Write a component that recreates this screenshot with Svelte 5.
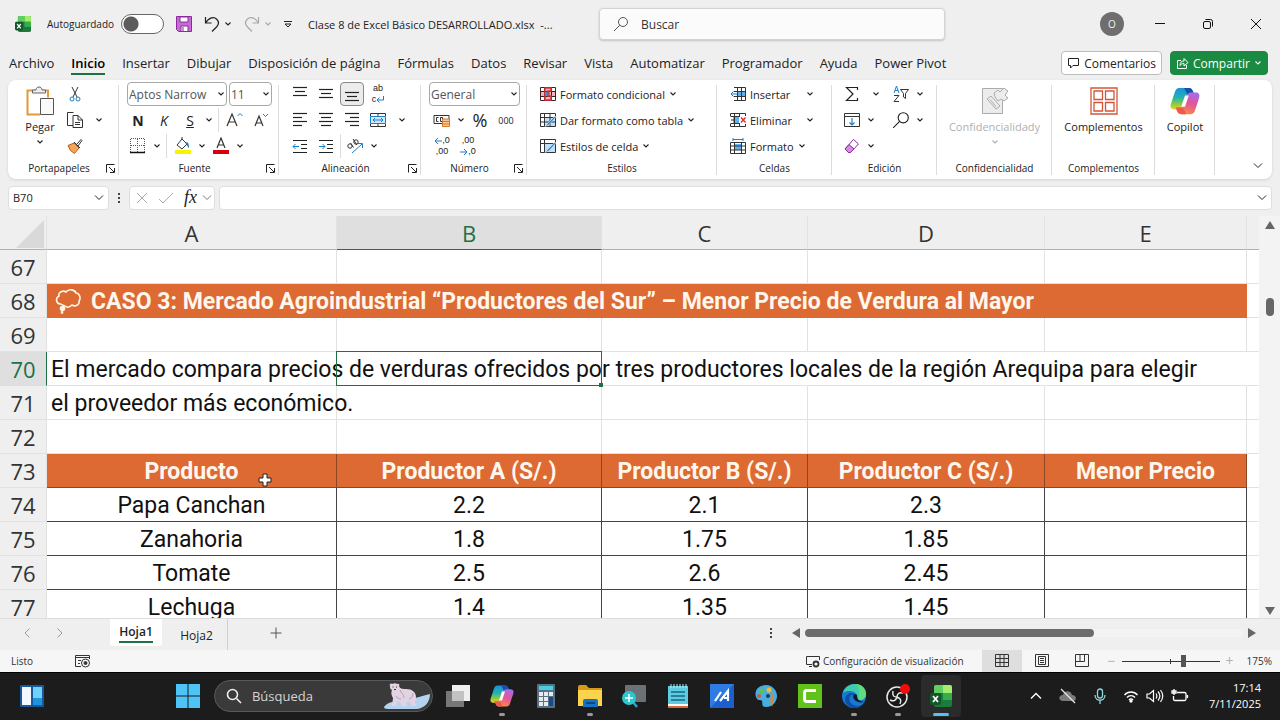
<script lang="ts">
  interface Row {
    n: number;
    kind: 'empty' | 'banner' | 'text' | 'head' | 'data';
    cells: string[];
  }

  const menu = [
    'Archivo', 'Inicio', 'Insertar', 'Dibujar', 'Disposición de página', 'Fórmulas', 'Datos',
    'Revisar', 'Vista', 'Automatizar', 'Programador', 'Ayuda', 'Power Pivot'
  ];

  const columns = ['A', 'B', 'C', 'D', 'E'];

  const rows: Row[] = [
    { n: 67, kind: 'empty', cells: [] },
    { n: 68, kind: 'banner', cells: ['CASO 3: Mercado Agroindustrial “Productores del Sur” – Menor Precio de Verdura al Mayor'] },
    { n: 69, kind: 'empty', cells: [] },
    { n: 70, kind: 'text', cells: ['El mercado compara precios de verduras ofrecidos por tres productores locales de la región Arequipa para elegir'] },
    { n: 71, kind: 'empty', cells: ['el proveedor más económico.'] },
    { n: 72, kind: 'empty', cells: [] },
    { n: 73, kind: 'head', cells: ['Producto', 'Productor A (S/.)', 'Productor B (S/.)', 'Productor C (S/.)', 'Menor Precio'] },
    { n: 74, kind: 'data', cells: ['Papa Canchan', '2.2', '2.1', '2.3'] },
    { n: 75, kind: 'data', cells: ['Zanahoria', '1.8', '1.75', '1.85'] },
    { n: 76, kind: 'data', cells: ['Tomate', '2.5', '2.6', '2.45'] },
    { n: 77, kind: 'data', cells: ['Lechuga', '1.4', '1.35', '1.45'] }
  ];

  const apps = [
    { id: 'taskview', label: 'Vista de tareas' },
    { id: 'copilot', label: 'Copilot', open: true },
    { id: 'calc', label: 'Calculadora' },
    { id: 'folder', label: 'Explorador de archivos', open: true },
    { id: 'magnifier', label: 'Lupa' },
    { id: 'notepad', label: 'Bloc de notas' },
    { id: 'myasus', label: 'MyASUS' },
    { id: 'paint', label: 'Paint' },
    { id: 'camtasia', label: 'Camtasia' },
    { id: 'edge', label: 'Edge', open: true },
    { id: 'obs', label: 'OBS', open: true },
    { id: 'excel', label: 'Excel', open: true, active: true }
  ];

  let activeMenu = $state('Inicio');
  let activeCell = $state('B70');
  let autosave = $state(false);
  let zoom = $state(175);
</script>

{#snippet chevron()}
  <svg class="chev" width="8" height="8" viewBox="0 0 8 8"><path d="M1.5 2.5 4 5l2.5-2.5" fill="none" stroke="currentColor" stroke-width="1.1" /></svg>
{/snippet}

{#snippet lines(list: number[][])}
  <svg width="16" height="16" viewBox="0 0 16 16" stroke="#222" stroke-width="1.2">
    {#each list as [x1, x2, y]}<line {x1} {x2} y1={y} y2={y} />{/each}
  </svg>
{/snippet}

{#snippet copilotIcon(size: number)}
  <svg width={size} height={size} viewBox="0 0 32 32">
    <defs>
      <linearGradient id="cpA" x1="0" y1="0" x2="0" y2="1"><stop offset="0" stop-color="#1d8fe0" /><stop offset=".45" stop-color="#22b3b0" /><stop offset=".75" stop-color="#8ecb3f" /><stop offset="1" stop-color="#f4cf22" /></linearGradient>
      <linearGradient id="cpB" x1=".7" y1="0" x2=".3" y2="1"><stop offset="0" stop-color="#a66ce8" /><stop offset=".45" stop-color="#e2559c" /><stop offset="1" stop-color="#fa8f3c" /></linearGradient>
    </defs>
    <path d="M10 2h10c3 0 4 2 5 5l1 3h-4c-3 0-4 1-5 4l-3 9c-1 2-2 2-4 2H5c-4 0-5-2-4-6l4-12c1-3 2-5 5-5z" fill="url(#cpA)" />
    <path d="M15 2h5c3 0 4 2 5 5l1 3h-4c-2 0-4-1-5-4z" fill="#184fae" />
    <path d="M22 30H12c-3 0-4-2-5-5l-1-2h4c3 0 4-1 5-4l3-9c1-2 2-3 4-3h5c4 0 5 2 4 6l-4 12c-1 3-2 5-5 5z" fill="url(#cpB)" />
    <path d="M17 30h-5c-3 0-4-2-5-5l-1-2h4c3 0 5 1 6 4z" fill="#ee5a4e" />
    <path d="M16 10h4l-4 12h-4z" fill="#fff" />
  </svg>
{/snippet}

{#snippet excelIcon(size: number)}
  <svg width={size} height={size} viewBox="0 0 22 22">
    <rect x="4" y="0" width="18" height="22" rx="2" fill="#1c7a3c" />
    <path d="M6 0h7v8H4V2q0-2 2-2z" fill="#5fd060" /><path d="M13 0h7q2 0 2 2v6h-9z" fill="#a2ee6c" />
    <rect x="13" y="8" width="9" height="7" fill="#37ae4c" />
    <rect x="0" y="8" width="11" height="12" rx="2" fill="#12572b" />
    <path d="M3 11l5 6M8 11l-5 6" stroke="#fff" stroke-width="1.8" />
  </svg>
{/snippet}

{#snippet magnifier(size: number)}
  <svg width={size} height={size} viewBox="0 0 16 16" fill="none" stroke="currentColor"><circle cx="10" cy="6" r="4.5" /><path d="M6.8 9.2 1 15" /></svg>
{/snippet}

{#snippet gridIcon(kind: string)}
  <svg width="16" height="16" viewBox="0 0 16 16" fill="none">
    {#if kind === 'cond'}
      <path d="M4 1h8v14H4zM1 5h14v6H1z" fill="#f7b3b3" /><path d="M6 6h4v5H6z" fill="#4a9be0" />
      <path d="M.5 1.5h15v13H.5zM.5 5.5h15M.5 10.5h15M4.5 1v14M11.5 1v14" stroke="#3a2226" />
      <path d="M5 2h6v3H8v5h3v4H5z" fill="none" stroke="#e0303a" stroke-width="1.5" />
    {:else if kind === 'table' || kind === 'cell'}
      <path d="M5 5h10v9H5z" fill="#bfe0f7" />
      <path d="M.5 1.5h15v13H.5zM.5 5.5h15M4.5 1v14" stroke="#333" />
      {#if kind === 'table'}<path d="M10 1.5v13M1 10h14" stroke="#333" />{/if}
      <path d="M15 4 8 11l-3 3.5 4-1.5 7-8z" fill="#2e86d0" stroke="#fff" stroke-width=".5" />
    {:else if kind === 'insert'}
      <path d="M8 5h8v6H8z" fill="#5fb2ec" />
      <path d="M4 1.5h11.5v13H4M4 5.5h11.5M4 10.5h11.5M7.5 1v14M11.5 1v14" stroke="#333" />
      <path d="M7 8H1M3.5 5.5 1 8l2.5 2.5" stroke="#1a7fcb" />
    {:else if kind === 'delete'}
      <path d="M3 5h6v6H3z" fill="#5fb2ec" />
      <path d="M.5 4V1.5h15V4M.5 4.5H10M.5 11.5H10M.5 12v2.5h15V12M4.5 1v14M9.5 1v4M9.5 11v4M1 8h3" stroke="#333" />
      <path d="m11 5.5 4.5 5M15.5 5.5l-4.5 5" stroke="#d92b2b" stroke-width="1.3" />
    {:else}
      <path d="M4 6h8v6H4z" fill="#5fb2ec" />
      <path d="M.5 4.5h15v11H.5zM.5 8h15M.5 12h15M4.500 4v11M11.5 4v11" stroke="#333" />
      <path d="M3 1.5h10M3 0v3M13 0v3" stroke="#1a7fcb" />
    {/if}
  </svg>
{/snippet}

{#snippet launcher()}
  <button class="launch" aria-label="Más opciones">
    <svg width="9" height="9" viewBox="0 0 9 9" fill="none" stroke="#222"><path d="M.5 8.5V.5h8M3 3l5 5M8.5 4v4.5H4" /></svg>
  </button>
{/snippet}

<div class="window">
  <header class="titlebar">
    <div class="quick">
      {@render excelIcon(16)}
      <label class="autosave">Autoguardado <input type="checkbox" bind:checked={autosave} /></label>
      <button aria-label="Guardar">
        <svg width="16" height="16" viewBox="0 0 16 16"><path d="M.5.5h15v15H2.5l-2-2z" fill="#c86ad6" stroke="#8a2a9c" /><path d="M4 1h8v5H4zM5 10h7v5.500H5z" fill="#fff" stroke="#8a2a9c" /><path d="M7 11v4" stroke="#8a2a9c" /></svg>
      </button>
      <button class="arrow" aria-label="Deshacer">
        <svg width="16" height="16" viewBox="0 0 16 16" fill="none" stroke="#222" stroke-width="1.2"><path d="M1.5 1v6h6M1.5 7C5 1 10 .5 12.5 3s2.5 5.500 0 8L8 15.5" /></svg>{@render chevron()}
      </button>
      <button class="arrow off" aria-label="Rehacer">
        <svg width="16" height="16" viewBox="0 0 16 16" fill="none" stroke="#a8a8a8" stroke-width="1.2"><path d="M14.5 1v6h-6M14.5 7C11 1 6 .5 3.5 3S1 8.5 3.5 11L8 15.5" /></svg>{@render chevron()}
      </button>
      <button class="customize" aria-label="Personalizar barra">
        <svg width="8" height="8" viewBox="0 0 8 8" fill="none" stroke="#222"><path d="M0 1.5h8M1 4h6L4 7z" /></svg>
      </button>
      <span class="filename">Clase 8 de Excel Básico DESARROLLADO.xlsx&nbsp; -...</span>
    </div>
    <label class="search">{@render magnifier(16)}<input type="search" placeholder="Buscar" aria-label="Buscar" /></label>
    <div class="controls">
      <button aria-label="Cuenta"><span class="avatar">O</span></button>
      <button aria-label="Minimizar"><svg width="12" height="12" stroke="#111"><path d="M1 5.5h10" /></svg></button>
      <button aria-label="Restaurar"><svg width="12" height="12" viewBox="0 0 12 12" fill="none" stroke="#111"><rect x="1.5" y="3.5" width="7" height="7" rx="1.5" /><path d="M3.5 1.5h5q2 0 2 2v5" /></svg></button>
      <button aria-label="Cerrar"><svg width="12" height="12" stroke="#111"><path d="m1 1 10 10M11 1 1 11" /></svg></button>
    </div>
  </header>

  <nav class="menu">
    {#each menu as item}
      <button class="menu-item" class:active={activeMenu === item} onclick={() => (activeMenu = item)}>{item}</button>
    {/each}
    <div class="menu-actions">
      <button class="comments">
        <svg width="13" height="13" viewBox="0 0 13 13" fill="none" stroke="#222"><path d="M1.5 1.5h10v7H6L3.5 11V8.500h-2z" /></svg>Comentarios
      </button>
      <button class="share">
        <svg width="13" height="13" viewBox="0 0 13 13" fill="none" stroke="#fff"><path d="M5 3.5H1.5v8h9V8M4 8.5c0-3 1.5-4.500 4-4.500V1.5l4 4-4 3.500V6.500C6 6.5 5 7 4 8.5z" /></svg>Compartir {@render chevron()}
      </button>
    </div>
  </nav>

  <section class="ribbon">
    <div class="group">
      <div class="body clipboard">
        <button class="big">
          <svg width="28" height="30" viewBox="0 0 28 30" fill="none"><path d="M9 4.5H1.5v24H14M17 4.5h5v7" stroke="#e39a38" stroke-width="2" /><path d="M6.5 7V4H10c0-4 6-4 6 0h3.5v3z" fill="#eee" stroke="#666" /><path d="M14.5 12.5h13v16h-13z" fill="#fafafa" stroke="#555" /></svg>
          <span>Pegar</span>{@render chevron()}
        </button>
        <div class="stack">
          <button class="tool" aria-label="Cortar"><svg width="12" height="16" viewBox="0 0 12 16" fill="none"><path d="m3 1 5 10M9 1 4 11" stroke="#333" /><circle cx="3" cy="13" r="2" stroke="#1a7fcb" /><circle cx="9" cy="13" r="2" stroke="#1a7fcb" /></svg></button>
          <div class="line">
            <button class="tool" aria-label="Copiar"><svg width="16" height="16" viewBox="0 0 16 16" fill="none" stroke="#333"><path d="M6 13.5H.5V.5h6M6 3.5h5l4.500 4.500v7.500H6zM11 3.5V8h4.500M8 10.5h5M8 12.5h5" /></svg></button>
            <button class="drop wide" aria-label="Opciones de copiar">{@render chevron()}</button>
          </div>
          <button class="tool" aria-label="Copiar formato"><svg width="16" height="16" viewBox="0 0 16 16"><path d="M1 7.5 7 5l5 5-4.500 5.500-4-3z" fill="#f2a65a" stroke="#c45a12" /><path d="m7 4 6 6M9.5 6.5l4.500-5 1 1L11 8" fill="#fff" stroke="#333" /></svg></button>
        </div>
      </div>
      <footer><span>Portapapeles</span>{@render launcher()}</footer>
    </div>

    <div class="group">
      <div class="body stack fonts">
        <div class="line">
          <span class="picker font"><select aria-label="Fuente"><option>Aptos Narrow</option></select>{@render chevron()}</span>
          <span class="picker size"><select aria-label="Tamaño"><option>11</option></select>{@render chevron()}</span>
        </div>
        <div class="line">
          <button class="tool bold">N</button><button class="tool italic">K</button><button class="tool under">S</button>
          <button class="drop" aria-label="Subrayado">{@render chevron()}</button>
          <i class="rule"></i>
          <button class="tool" aria-label="Aumentar fuente"><svg width="18" height="16" viewBox="0 0 18 16" fill="none"><path d="M1 14 6 2l5 12M3 10h6" stroke="#333" stroke-width="1.2" /><path d="m11.5 4 2.5-2.5L16.5 4" stroke="#1a7fcb" /></svg></button>
          <button class="tool" aria-label="Reducir fuente"><svg width="16" height="16" viewBox="0 0 16 16" fill="none"><path d="M2 14 6 4l4 10M3.5 11h5" stroke="#333" stroke-width="1.2" /><path d="m10 2 2.5 2.500L15 2" stroke="#1a7fcb" /></svg></button>
        </div>
        <div class="line">
          <button class="tool" aria-label="Bordes"><svg width="16" height="16" viewBox="0 0 16 16" fill="none" stroke="#555"><path d="M.5 14V.5h14V14M7.5 1v13M1 7.5h14" stroke-dasharray="1 1" /><path d="M0 14.5h15" stroke="#111" stroke-width="1.5" /></svg></button>
          <button class="drop" aria-label="Tipos de borde">{@render chevron()}</button>
          <i class="rule"></i>
          <button class="tool" aria-label="Color de relleno"><svg width="18" height="18" viewBox="0 0 18 18"><path d="m8 2 5 5-5 5-5-4zM8 2V0" fill="#fff" stroke="#333" /><path d="M11 6c3-2 4 0 4 5-2-1-1-3-4-5z" fill="#1a7fcb" /><path d="M1 13h16v4H1z" fill="#f8f400" /></svg></button>
          <button class="drop" aria-label="Colores de relleno">{@render chevron()}</button>
          <button class="tool" aria-label="Color de fuente"><svg width="18" height="18" viewBox="0 0 18 18"><path d="M5 11 9 1l4 10M6.5 8h5" fill="none" stroke="#333" stroke-width="1.2" /><path d="M1 13h16v4H1z" fill="#d4000f" /></svg></button>
          <button class="drop" aria-label="Colores de fuente">{@render chevron()}</button>
        </div>
      </div>
      <footer><span>Fuente</span>{@render launcher()}</footer>
    </div>

    <div class="group">
      <div class="body stack">
        <div class="line">
          <button class="tool" aria-label="Alinear arriba">{@render lines([[1, 15, 1.5], [3, 13, 5.5], [1, 15, 9.5]])}</button>
          <button class="tool" aria-label="Alinear en medio">{@render lines([[1, 15, 3.5], [3, 13, 7.5], [1, 15, 11.5]])}</button>
          <button class="tool on" aria-label="Alinear abajo">{@render lines([[1, 15, 6.5], [3, 13, 10.5], [1, 15, 14.5]])}</button>
          <button class="tool pair" aria-label="Ajustar texto">
            <span>ab</span>
            <span>c<svg width="8" height="8" viewBox="0 0 8 8" fill="none" stroke="#1a7fcb"><path d="M7.5 0v4H1M3.5 1.5 1 4l2.5 2.5" /></svg></span>
          </button>
        </div>
        <div class="line">
          <button class="tool" aria-label="Alinear a la izquierda">{@render lines([[1, 15, 1.5], [1, 10, 5.5], [1, 15, 9.5], [1, 10, 13.5]])}</button>
          <button class="tool" aria-label="Centrar">{@render lines([[1, 15, 1.5], [3, 13, 5.5], [1, 15, 9.5], [3, 13, 13.5]])}</button>
          <button class="tool" aria-label="Alinear a la derecha">{@render lines([[1, 15, 1.5], [6, 15, 5.5], [1, 15, 9.5], [6, 15, 13.5]])}</button>
          <button class="tool" aria-label="Combinar y centrar"><svg width="16" height="16" viewBox="0 0 16 16" fill="none"><path d="M.5 4.5h15v7H.5z" fill="#cfe9fa" stroke="#1a7fcb" /><path d="M.5 4V1.5h15V4M8 1.5V4M.5 12v2.500h15V12M8 12v2.500" stroke="#333" /><path d="M3 8h10M5 6 3 8l2 2M11 6l2 2-2 2" stroke="#1a7fcb" /></svg></button>
          <button class="drop wide" aria-label="Opciones de combinar">{@render chevron()}</button>
        </div>
        <div class="line">
          <button class="tool" aria-label="Disminuir sangría"><svg width="16" height="16" viewBox="0 0 16 16" fill="none" stroke="#222"><path d="M1 2.5h14M9 6.5h6M9 10.5h6M1 14.5h14" /><path d="M7 8.5H1M3.5 6 1 8.5 3.5 11" stroke="#1a7fcb" /></svg></button>
          <button class="tool" aria-label="Aumentar sangría"><svg width="16" height="16" viewBox="0 0 16 16" fill="none" stroke="#222"><path d="M1 2.5h14M9 6.5h6M9 10.5h6M1 14.5h14" /><path d="M1 8.5h6M4.5 6 7 8.5 4.5 11" stroke="#1a7fcb" /></svg></button>
          <i class="rule tight"></i>
          <button class="tool" aria-label="Orientación"><svg width="18" height="18" viewBox="0 0 18 18" fill="none"><g stroke="#333"><circle cx="4" cy="9" r="2.2" /><path d="m4.500 6 3 4.500M7 2l4 6" /><circle cx="10" cy="5" r="2.2" /></g><path d="M6 16 16 7M12 6.5h4.500V11" stroke="#1a7fcb" /></svg></button>
          <button class="drop" aria-label="Orientaciones">{@render chevron()}</button>
        </div>
      </div>
      <footer><span>Alineación</span>{@render launcher()}</footer>
    </div>

    <div class="group">
      <div class="body stack">
        <div class="line">
          <span class="picker number"><select aria-label="Formato de número"><option>General</option></select>{@render chevron()}</span>
        </div>
        <div class="line">
          <button class="tool" aria-label="Moneda"><svg width="18" height="16" viewBox="0 0 18 16" fill="none"><path d="M1 3.5h15v8H1z" stroke="#333" /><path d="M5.5 5.5H3.5v4h2M9.5 5.5h-2v4h2z" stroke="#333" /><path d="M9.5 7h7v7.500h-7z" fill="#f7c79a" stroke="#d9782a" /><path d="M9.5 9.5h7M9.5 12h7" stroke="#d9782a" /></svg></button>
          <button class="drop" aria-label="Monedas">{@render chevron()}</button>
          <button class="tool percent">%</button><button class="tool thousands">000</button>
        </div>
        <div class="line">
          <button class="tool pair" aria-label="Aumentar decimales">
            <span><svg width="8" height="10" viewBox="0 0 8 10" fill="none" stroke="#1a7fcb"><path d="M8 5H1M4 2 1 5l3 3" /></svg>,0</span>
            <span>,00</span>
          </button>
          <button class="tool pair" aria-label="Disminuir decimales">
            <span>,00</span>
            <span><svg width="8" height="10" viewBox="0 0 8 10" fill="none" stroke="#1a7fcb"><path d="M0 5h7M4 2l3 3-3 3" /></svg>,0</span>
          </button>
        </div>
      </div>
      <footer><span>Número</span>{@render launcher()}</footer>
    </div>

    <div class="group">
      <div class="body stack inset">
        <button class="row-btn">{@render gridIcon('cond')}Formato condicional{@render chevron()}</button>
        <button class="row-btn">{@render gridIcon('table')}Dar formato como tabla{@render chevron()}</button>
        <button class="row-btn">{@render gridIcon('cell')}Estilos de celda{@render chevron()}</button>
      </div>
      <footer><span>Estilos</span></footer>
    </div>

    <div class="group">
      <div class="body stack inset">
        <button class="row-btn spread">{@render gridIcon('insert')}<span>Insertar</span>{@render chevron()}</button>
        <button class="row-btn spread">{@render gridIcon('delete')}<span>Eliminar</span>{@render chevron()}</button>
        <button class="row-btn">{@render gridIcon('format')}Formato{@render chevron()}</button>
      </div>
      <footer><span>Celdas</span></footer>
    </div>

    <div class="group">
      <div class="body edit">
        <div class="line">
          <button class="tool" aria-label="Autosuma"><svg width="14" height="16" viewBox="0 0 14 16" fill="none" stroke="#222" stroke-width="1.2"><path d="M12.5 4V1.5H1.5L8 8l-6.500 6.500h11V12" /></svg></button>
          <button class="drop wide" aria-label="Más funciones">{@render chevron()}</button>
        </div>
        <div class="line">
          <button class="tool" aria-label="Ordenar y filtrar"><svg width="18" height="18" viewBox="0 0 18 18" fill="none"><path d="m2 8 2.5-7L7 8M3 5.5h3" stroke="#1a7fcb" /><path d="M2 10.5h5L2 16.5h5M8.5 4.5h8L13.5 8.5v5l-2-1.500V8.5z" stroke="#333" /></svg></button>
          <button class="drop" aria-label="Opciones de orden">{@render chevron()}</button>
        </div>
        <div class="line">
          <button class="tool" aria-label="Rellenar"><svg width="16" height="16" viewBox="0 0 16 16" fill="none"><path d="M.5 1.5h15v13H.5zM.5 4.5h15" stroke="#333" /><path d="M8 6v7M5.500 10.5 8 13l2.500-2.500" stroke="#1a7fcb" stroke-width="1.2" /></svg></button>
          <button class="drop" aria-label="Opciones de relleno">{@render chevron()}</button>
        </div>
        <div class="line">
          <button class="tool" aria-label="Buscar y seleccionar">{@render magnifier(18)}</button>
          <button class="drop" aria-label="Opciones de búsqueda">{@render chevron()}</button>
        </div>
        <div class="line">
          <button class="tool" aria-label="Borrar"><svg width="16" height="16" viewBox="0 0 16 16"><path d="M9.5 1.5 14.5 6l-8 8.500h-2L1 11z" fill="#fff" stroke="#8a2a9c" /><path d="m1 11 4-4.500 5 4.500-3.500 3.500h-2z" fill="#d58be0" stroke="#8a2a9c" /></svg></button>
          <button class="drop" aria-label="Opciones de borrar">{@render chevron()}</button>
        </div>
      </div>
      <footer><span>Edición</span></footer>
    </div>

    <div class="group">
      <div class="body center">
        <button class="big off">
          <svg width="28" height="30" viewBox="0 0 28 30" fill="#ececec" stroke="#ababab"><path d="M1.5 2.5h20v25h-20z" /><path d="m6 13 4-3 9 10-4 3zM9 13.500l6 7M13 7l4-3 2 2 4-4 4 3-3 4 3 3-4 3-3-2-3 2-3-4z" /></svg>
          <span>Confidencialidady</span>{@render chevron()}
        </button>
      </div>
      <footer><span>Confidencialidad</span></footer>
    </div>

    <div class="group">
      <div class="body center">
        <button class="big">
          <svg width="28" height="30" viewBox="0 0 28 30" fill="none" stroke="#d2553a" stroke-width="1.3"><path d="M1 2h26v26H1zM4 5h8.500v8.500H4zM15.5 5H24v8.500h-8.500zM4 16.500h8.500V25H4zM15.500 16.500H24V25h-8.500z" /></svg>
          <span>Complementos</span>
        </button>
      </div>
      <footer><span>Complementos</span></footer>
    </div>

    <div class="group">
      <div class="body center">
        <button class="big">{@render copilotIcon(30)}<span>Copilot</span></button>
      </div>
    </div>

    <button class="collapse" aria-label="Contraer la cinta"><svg width="10" height="8" viewBox="0 0 10 8" fill="none" stroke="#222"><path d="m1 1.5 4 4 4-4" /></svg></button>
  </section>

  <div class="formula-bar">
    <div class="box name">
      <input aria-label="Cuadro de nombres" bind:value={activeCell} />
      <svg width="10" height="8" viewBox="0 0 10 8" fill="none" stroke="#222"><path d="m1 1.5 4 4 4-4" /></svg>
    </div>
    <span class="dots"></span>
    <div class="box fx">
      <button aria-label="Cancelar"><svg width="12" height="12" stroke="#aaa"><path d="m1 1 10 10M11 1 1 11" /></svg></button>
      <button aria-label="Introducir"><svg width="16" height="12" fill="none" stroke="#aaa"><path d="m1 7 4 4L15 1" /></svg></button>
      <button class="fn">fx</button>
      <svg width="10" height="8" viewBox="0 0 10 8" fill="none" stroke="#777"><path d="m1 1.5 4 4 4-4" /></svg>
    </div>
    <div class="box formula">
      <input aria-label="Barra de fórmulas" />
      <svg width="10" height="8" viewBox="0 0 10 8" fill="none" stroke="#222"><path d="m1 1.5 4 4 4-4" /></svg>
    </div>
  </div>

  <main class="sheet">
    <div class="grid-area">
      <table>
        <colgroup>
          <col class="c-num" /><col class="c-a" /><col class="c-b" /><col class="c-c" /><col class="c-d" /><col class="c-e" /><col />
        </colgroup>
        <thead>
          <tr>
            <th class="corner" aria-label="Seleccionar todo"><svg width="28" height="28" viewBox="0 0 28 28"><path d="M28 0v28H0z" fill="#d9d9d9" /></svg></th>
            {#each columns as c}<th scope="col" class:sel={c === activeCell[0]}>{c}</th>{/each}
            <th class="rest"></th>
          </tr>
        </thead>
        <tbody>
          {#each rows as row}
            <tr class={row.kind}>
              <th scope="row" class:sel={String(row.n) === activeCell.slice(1)}>{row.n}</th>
              {#if row.kind === 'banner'}
                <td colspan="5">
                  <div class="banner-text">
                    <svg width="26" height="28" viewBox="0 0 26 28" fill="none" stroke="#fff6e8" stroke-width="1.6"><path d="M6 17c-5 0-6-6-2-8-1-4 4-6 7-4 3-4 9-2 10 1 4 0 5 6 3 8 1 4-4 6-7 4-2 2-5 3-7 1" /><path d="M6 17c2 2 3 1 4 2" /><circle cx="7.500" cy="21.5" r="2" fill="#fff6e8" /><circle cx="7" cy="25.5" r=".6" /></svg>
                    {row.cells[0]}
                  </div>
                </td>
              {:else}
                {#each columns as c, i}
                  <td class:selected={c + row.n === activeCell}>
                    {row.cells[i] ?? ''}
                    {#if row.kind === 'head' && i === 0}
                      <svg class="pointer" width="14" height="14" viewBox="0 0 14 14"><path d="M5 1h4v4h4v4H9v4H5V9H1V5h4z" fill="#fff" stroke="#222" /></svg>
                    {/if}
                  </td>
                {/each}
              {/if}
              <td class="rest"></td>
            </tr>
          {/each}
        </tbody>
      </table>
    </div>
    <div class="vscroll">
      <svg width="10" height="8"><path d="M5 0 10 8H0z" fill="#666" /></svg>
      <i></i>
      <svg width="10" height="8"><path d="M0 0h10L5 8z" fill="#666" /></svg>
    </div>
  </main>

  <div class="sheet-tabs">
    <button class="nav" aria-label="Hoja anterior"><svg width="8" height="12" fill="none" stroke="#999"><path d="M6.5 1.5 2 6l4.500 4.500" /></svg></button>
    <button class="nav" aria-label="Hoja siguiente"><svg width="8" height="12" fill="none" stroke="#999"><path d="M1.5 1.5 6 6l-4.500 4.500" /></svg></button>
    <button class="tab current"><span>Hoja1</span></button>
    <button class="tab">Hoja2</button>
    <button class="nav add" aria-label="Hoja nueva"><svg width="12" height="12" stroke="#555"><path d="M6 .5v11M.5 6h11" /></svg></button>
    <div class="hscroll">
      <span class="dots"></span>
      <svg width="8" height="10"><path d="M8 0v10L0 5z" fill="#666" /></svg>
      <div class="track"><i></i></div>
      <svg width="8" height="10"><path d="M0 0v10l8-5z" fill="#666" /></svg>
    </div>
  </div>

  <div class="status">
    <span>Listo</span>
    <svg class="macro" width="16" height="14" viewBox="0 0 16 14" fill="none" stroke="#333"><path d="M6 12.5H.5v-11h14V5M1 3.5h13M3 6.5h3M3 9.5h2" /><circle cx="10.5" cy="9" r="4" /><circle cx="10.5" cy="9" r="1.5" fill="#333" /></svg>
    <button class="display">
      <svg width="14" height="13" viewBox="0 0 14 13" fill="none" stroke="#333"><path d="M6 9.5H.5v-8h13V5M3 11.5h3" /><circle cx="10" cy="9" r="2.5" stroke-width="1.8" /></svg>Configuración de visualización
    </button>
    <button class="view on" aria-label="Normal"><svg width="14" height="14" viewBox="0 0 14 14" fill="none" stroke="#333"><path d="M.5.5h13v12H.5zM.5 4.500h13M.5 8.500h13M5 .5v12M9 .5v12" /></svg></button>
    <button class="view" aria-label="Diseño de página"><svg width="14" height="14" viewBox="0 0 14 14" fill="none" stroke="#333"><path d="M.5.5h13v12H.5zM3.500 2.500h7v8h-7zM5 4.500h4M5 6.500h4M5 8.500h4" /></svg></button>
    <button class="view" aria-label="Salto de página"><svg width="14" height="14" viewBox="0 0 14 14" fill="none" stroke="#333"><path d="M.5.5h13v12H.5zM.5 7.500h9V.5M5 .5v7" /></svg></button>
    <div class="zoom">
      <span class="sign">−</span><input type="range" min="10" max="270" bind:value={zoom} aria-label="Zoom" /><span class="sign">+</span>
    </div>
    <span class="pct">{zoom}%</span>
  </div>

  <footer class="taskbar">
    <div class="side">
      <button class="app" aria-label="Widgets"><svg width="24" height="22" viewBox="0 0 24 22"><rect width="24" height="22" rx="1" fill="#155a9c" /><rect x="2" y="2" width="9" height="18" fill="#f3f8fc" /><rect x="13" y="2" width="9" height="11" fill="#6fd0f8" /><rect x="13" y="13" width="9" height="7" fill="#1f93dc" /></svg></button>
    </div>
    <div class="apps">
      <button class="app" aria-label="Inicio"><svg width="24" height="24" viewBox="0 0 24 24" fill="#4cc4f5"><path d="M0 0h11.5v11.500H0zM12.5 0H24v11.500H12.500zM0 12.500h11.500V24H0zM12.500 12.500H24V24H12.500z" /></svg></button>
      <label class="task-search">
        <svg width="16" height="16" viewBox="0 0 16 16" fill="none" stroke="#eee" stroke-width="1.6"><circle cx="6.5" cy="6.5" r="5" /><path d="m10.5 10.5 4.500 4.500" /></svg>
        <input placeholder="Búsqueda" aria-label="Búsqueda" />
        <svg width="48" height="28" viewBox="0 0 48 28">
          <path d="M0 25c5-7 14-5 20-7 8-1 15-3 26-6 0 8-5 14-13 15H4c-3 0-4-1-4-2z" fill="#b5d3ee" />
          <path d="M6 4c-1-2 1-3 2-2 2-1 4-1 5 0 2-1 3 1 2 2 1 3 4 3 7 3 6 0 10 3 10 8 0 3-1 4-1 6l2 3h-5l-3-5-3 1 1 4h-5l-2-4-2-1-2 5H8l1-8c-2-3-2-6-1-8-2-1-2-2-2-4z" fill="#e2d3e2" />
          <path d="M16 8c1 3 4 4 4 8M25 17c3-1 4-3 4-6M12 14c1 2 3 3 5 3" stroke="#b39dbd" fill="none" />
          <path d="M8.500 5h1M12 5h1M10 7.500h2" stroke="#333" />
        </svg>
      </label>
      {#each apps as app}
        <button class="app" class:active={app.active} class:open={app.open} aria-label={app.label}>
          {#if app.id === 'copilot'}
            {@render copilotIcon(24)}
          {:else if app.id === 'excel'}
            {@render excelIcon(22)}
          {:else}
            <svg width="24" height="24" viewBox="0 0 24 24">
              {#if app.id === 'taskview'}
                <path d="M0 7h18v16H0z" fill="#777" /><path d="M6 1h18v16H6z" fill="#efefef" /><path d="M6 7h12v10H6z" fill="#c2c2c2" />
              {:else if app.id === 'calc'}
                <rect x="3" width="18" height="24" rx="1" fill="#567284" /><path d="M5 2h14v4H5z" fill="#45cfe0" /><path d="M5 8h4v4H5zM10 8h4v4h-4zM15 8h4v4h-4zM5 13h4v4H5zM10 13h4v4h-4zM5 18h4v4H5zM10 18h4v4h-4z" fill="#e6ebee" /><path d="M15 13h4v9h-4z" fill="#1a4b86" />
              {:else if app.id === 'folder'}
                <path d="M0 3q0-2 2-2h6l3 3h13v18H0z" fill="#d59b17" /><path d="M0 6h24v16H0z" fill="#fdd24c" /><path d="M5 23v-6q0-2 2-2h11q2 0 2 2v6z" fill="#1673c4" /><path d="M8 19h9" stroke="#0b3a70" stroke-width="1.5" />
              {:else if app.id === 'magnifier'}
                <rect x="3" y="1" width="21" height="17" rx="1" fill="#6a7177" /><path d="m11 18 4 5" stroke="#2a9fd8" stroke-width="2.5" /><circle cx="7" cy="14" r="7" fill="#2dc6cf" /><path d="M7 10v8M3 14h8" stroke="#fff" stroke-width="1.5" />
              {:else if app.id === 'notepad'}
                <path d="M2 2h20v20H2z" fill="#5fcbe0" /><path d="M2 20h20v2H2z" fill="#fff" /><path d="M2 22h20v2H2z" fill="#d86a3a" /><path d="M5 0v4M8 0v4M11 0v4M14 0v4M17 0v4M20 0v4" stroke="#bfeaf3" /><path d="M5 8h14M5 12h14M5 16h14" stroke="#146a84" stroke-width="1.5" />
              {:else if app.id === 'myasus'}
                <path d="M0 0h24v24H0z" fill="#1c5fd0" /><path d="M0 0h24L0 24z" fill="#2e7be4" /><path d="m5 17 6-9M10 17l8-10v10M14 14h4" stroke="#fff" stroke-width="2.2" fill="none" />
              {:else if app.id === 'paint'}
                <path d="M12 1C4 1 0 7 2 13c2 5 5 2 6 4 1 3-1 6 4 6 7 0 11-6 11-11S19 1 12 1z" fill="#48aee0" /><circle cx="8" cy="7" r="2.5" fill="#64c04a" /><circle cx="15" cy="6" r="2.5" fill="#f4b731" /><circle cx="5" cy="12" r="2" fill="#d8573c" /><circle cx="14" cy="12" r="2" fill="#1d3d60" /><path d="m18 7 2 9-2 7-2-7z" fill="#c98b4b" />
              {:else if app.id === 'camtasia'}
                <path d="M0 0h24v24H0z" fill="#61c21a" /><path d="M18 6.5h-9q-2.500 0-2.500 2.500v6q0 2.500 2.500 2.500h9" fill="none" stroke="#fff" stroke-width="3" />
              {:else if app.id === 'edge'}
                <circle cx="12" cy="12" r="12" fill="#1879d2" /><path d="M1 9C3 2 9 0 13 0c7 0 11 5 11 10 0 4-3 6-6 6-4 0-3-2-3-4 0-4-8-7-14-3z" fill="#3fcbb0" /><path d="M14 0c7 1 10 5 10 10 0 4-3 6-6 6-3-2 2-9-4-16z" fill="#62db7a" /><path d="M8 12c-3 8 6 12 12 9-5 6-16 3-17-5 0-4 3-7 6-7 5 0 6 3 6 4-2-3-5-3-7-1z" fill="#0c4fa3" /><path d="M15 11c-3-2-5 1-3 4 2 3 6 4 10 3-2-1-7 0-7-7z" fill="#101a26" />
              {:else if app.id === 'obs'}
                <circle cx="11" cy="13" r="10" fill="#181818" stroke="#e8e8e8" stroke-width="1.5" /><path d="M7 7c-1 5 1 6 4 6 3 1 5 3 3 7M17 9c-4-1-6 1-6 4-1 3-3 5-7 3" stroke="#e8e8e8" stroke-width="1.5" fill="none" /><circle cx="19" cy="5" r="5" fill="#f20d0d" />
              {/if}
            </svg>
          {/if}
        </button>
      {/each}
    </div>
    <div class="tray">
      <svg width="12" height="12" viewBox="0 0 12 12" fill="none" stroke="#fff" stroke-width="1.4"><path d="m1 8.5 5-5 5 5" /></svg>
      <svg width="18" height="16" viewBox="0 0 18 16"><path d="M4 13c-5 0-5-6 0-6 1-5 8-5 9 0 5 0 5 6 1 6z" fill="#7b7b7b" /><path d="m2 1 14 14" stroke="#e8e8e8" stroke-width="1.2" /></svg>
      <svg width="12" height="16" viewBox="0 0 12 16" fill="none" stroke="#8fd8dc" stroke-width="1.3"><rect x="3.5" y="1" width="5" height="9" rx="2.5" /><path d="M1 7c0 7 10 7 10 0M6 12.5V16" /></svg>
      <div class="net">
        <svg width="16" height="14" viewBox="0 0 16 14" fill="none" stroke="#fff" stroke-width="1.3"><path d="M1.5 6C5 2 11 2 14.5 6M4 8.5c2-2.500 6-2.500 8 0M6 11c1-1.500 3-1.500 4 0" /><circle cx="8" cy="12" r="1" fill="#fff" /></svg>
        <svg width="18" height="14" viewBox="0 0 18 14" fill="none" stroke="#fff" stroke-width="1.2"><path d="M1 5v4h2.500L7.500 12.500v-11L3.500 5zM10 4.500c1 1.500 1 3.500 0 5M12 2.500c2.500 3 2.500 6 0 9M14.500 1c3 4 3 8 0 12" /></svg>
        <svg width="18" height="14" viewBox="0 0 18 14" fill="none" stroke="#fff" stroke-width="1.3"><path d="M6 3.5h7.500q1.500 0 1.500 1.500v5q0 1.500-1.500 1.500H4q-1.500 0-1.500-1.500V7M16.500 6v3M3 0v6M1 2h4v2H1z" /></svg>
      </div>
      <time><span>17:14</span><span>7/11/2025</span></time>
    </div>
  </footer>
</div>

<style>
  :global(body) {
    margin: 0;
    background: #efefef;
  }

  .window {
    display: flex;
    flex-direction: column;
    height: 100vh;
    overflow: hidden;
    background: #efefef;
    color: #222;
    font-family: "Open Sans", "Noto Sans", sans-serif;
    font-size: 11px;
  }

  .window *, .window *::before, .window *::after {
    box-sizing: border-box;
  }

  button, input, select {
    font: inherit;
    color: inherit;
    background: none;
    border: none;
    padding: 0;
    margin: 0;
    outline: none;
  }

  button {
    display: flex;
    align-items: center;
    justify-content: center;
    white-space: nowrap;
  }

  svg {
    flex: none;
  }

  .titlebar {
    display: grid;
    grid-template-columns: 46.8% 27% 1fr;
    align-items: center;
    flex: none;
    height: 48px;
  }

  .quick {
    display: flex;
    align-items: center;
    gap: 12px;
    padding-left: 15px;
    white-space: nowrap;
    overflow: hidden;
  }

  .autosave {
    display: flex;
    align-items: center;
    gap: 7px;
    margin-left: 4px;
    font-size: 10px;
  }

  .autosave input {
    appearance: none;
    width: 43px;
    height: 20px;
    border: 1px solid #666;
    border-radius: 10px;
    background: #fff radial-gradient(circle at 9px 9px, #5c5c5c 7px, transparent 8px);
  }

  .arrow {
    gap: 4px;
  }

  .arrow.off {
    color: #a8a8a8;
  }

  .filename {
    margin-left: 4px;
  }

  .search {
    display: flex;
    align-items: center;
    gap: 12px;
    height: 32px;
    padding: 0 13px;
    background: #fbfbfb;
    border: 1px solid #d4d4d4;
    border-radius: 4px;
    box-shadow: 0 1px 2px #c4c4c4;
    color: #555;
    font-size: 12px;
  }

  .search input {
    flex: 1;
    min-width: 0;
  }

  .search input::placeholder {
    color: #333;
    opacity: 1;
  }

  .controls {
    display: flex;
    justify-content: flex-end;
  }

  .controls button {
    width: 48px;
    height: 32px;
  }

  .avatar {
    width: 24px;
    height: 24px;
    border-radius: 50%;
    background: #6e6e6e;
    color: #eee;
    font-size: 10px;
    line-height: 24px;
  }

  .menu {
    display: flex;
    align-items: center;
    flex: none;
    gap: 17px;
    height: 32px;
    padding: 0 12px 0 9px;
    font-size: 13px;
  }

  .menu-item {
    height: 22px;
    border-bottom: 2px solid transparent;
  }

  .menu-item.active {
    border-color: #1e7145;
    color: #000;
    font-weight: 600;
  }

  .menu-actions {
    display: flex;
    gap: 8px;
    height: 26px;
    margin-left: auto;
    font-size: 12px;
  }

  .comments, .share {
    gap: 4px;
    height: 24px;
    padding: 0 5px;
    border: 1px solid #bdbdbd;
    border-radius: 4px;
    background: #fff;
  }

  .share {
    background: #1b8a43;
    border-color: #1b8a43;
    color: #fff;
  }

  .ribbon {
    display: grid;
    grid-template-columns: 111px 160px 142px 106px 190px 115px 105px 115px 103px 60px 1fr;
    flex: none;
    height: 99px;
    margin: 0 8px;
    background: #fff;
    border-radius: 8px;
    box-shadow: 0 1px 3px #d2d2d2;
  }

  .group {
    display: flex;
    flex-direction: column;
    min-width: 0;
    padding: 1px 0 3px;
    background: linear-gradient(#dcdcdc, #dcdcdc) right center / 1px 90px no-repeat;
  }

  .body {
    height: 78px;
    padding-left: 8px;
  }

  .group footer {
    display: flex;
    align-items: center;
    justify-content: center;
    height: 18px;
    padding: 0 4px;
    font-size: 10px;
  }

  .group footer span {
    flex: 1;
    text-align: center;
  }

  .launch {
    width: 9px;
    height: 9px;
  }

  .stack {
    display: flex;
    flex-direction: column;
  }

  .line {
    display: flex;
    align-items: center;
    height: 26px;
  }

  .tool {
    width: 26px;
    height: 26px;
    font-size: 14px;
  }

  .tool.on {
    width: 24px;
    height: 24px;
    margin: 0 1px;
    border: 1px solid #8a8a8a;
    border-radius: 4px;
    background: #ececec;
  }

  .drop {
    width: 12px;
    height: 26px;
  }

  .drop.wide {
    width: 22px;
  }

  .rule {
    width: 1px;
    height: 24px;
    margin: 0 3px;
    background: #dcdcdc;
  }

  .rule.tight {
    margin: 0 1px;
  }

  .bold {
    font-weight: 700;
  }

  .italic {
    font-style: italic;
  }

  .under {
    text-decoration: underline;
  }

  .clipboard {
    display: flex;
    padding-left: 10px;
  }

  .fonts {
    padding-left: 6px;
  }

  .big {
    flex-direction: column;
    justify-content: flex-start;
    gap: 2px;
    width: 44px;
    padding-top: 5px;
    line-height: 18px;
  }

  .center {
    display: flex;
    justify-content: center;
    padding: 0;
  }

  .off {
    color: #b0b0b0;
  }

  .picker {
    position: relative;
    height: 24px;
    border: 1px solid #a8a8a8;
    border-radius: 4px;
  }

  .picker select {
    appearance: none;
    width: 100%;
    height: 22px;
    padding-left: 1px;
    color: #555;
    font-size: 12px;
  }

  .picker :global(.chev) {
    position: absolute;
    right: 1px;
    top: 7px;
  }

  .font {
    width: 100px;
    margin: 0 2px;
  }

  .size {
    width: 43px;
  }

  .number {
    width: 91px;
  }

  .pair {
    flex-direction: column;
    font-family: "Liberation Sans", sans-serif;
    font-size: 9px;
    line-height: 11px;
  }

  .pair span {
    display: flex;
    align-items: center;
  }

  .percent {
    font-size: 18px;
  }

  .thousands {
    font-size: 9px;
  }

  .inset {
    padding-left: 13px;
  }

  .row-btn {
    justify-content: flex-start;
    gap: 4px;
    height: 26px;
  }

  .spread span {
    width: 52px;
    text-align: left;
  }

  .edit {
    display: grid;
    grid-template-columns: 49px 1fr;
    grid-auto-rows: 26px;
    padding-left: 7px;
  }

  .collapse {
    align-self: end;
    justify-self: end;
    width: 28px;
    height: 28px;
  }

  .formula-bar {
    display: flex;
    align-items: center;
    flex: none;
    height: 37px;
    padding: 0 8px;
  }

  .box {
    display: flex;
    align-items: center;
    height: 24px;
    background: #fff;
    border: 1px solid #dedede;
    border-radius: 4px;
  }

  .name {
    width: 101px;
    padding: 0 4px;
  }

  .box input {
    flex: 1;
    min-width: 0;
  }

  .dots {
    width: 2px;
    height: 10px;
    background: repeating-linear-gradient(#444 0 2px, transparent 2px 4px);
  }

  .formula-bar .dots {
    margin: 0 9px;
  }

  .fx {
    gap: 10px;
    width: 86px;
    padding-left: 6px;
  }

  .fn {
    font-family: "Liberation Serif", serif;
    font-size: 18px;
    font-style: italic;
  }

  .fx > svg {
    margin-left: -5px;
  }

  .formula {
    flex: 1;
    margin-left: 4px;
    padding-right: 4px;
  }

  .sheet {
    display: flex;
    flex: 1;
    min-height: 0;
    background: #fff;
  }

  .grid-area {
    flex: 1;
    min-width: 0;
    overflow: hidden;
  }

  table {
    width: 100%;
    table-layout: fixed;
    border-collapse: separate;
    border-spacing: 0;
    font-family: Roboto, "Open Sans", sans-serif;
    font-size: 23px;
    line-height: 30px;
    color: #111;
  }

  .c-num {
    width: 47px;
  }

  .c-a {
    width: 290px;
  }

  .c-b {
    width: 265px;
  }

  .c-c {
    width: 206px;
  }

  .c-d {
    width: 237px;
  }

  .c-e {
    width: 202px;
  }

  th, td {
    height: 34px;
    padding: 0;
    border: solid #e2e2e2;
    border-width: 0 1px 1px 0;
    white-space: nowrap;
  }

  th {
    background: #efefef;
    color: #333;
    font-family: "Open Sans", sans-serif;
    font-size: 22px;
    font-weight: 400;
  }

  thead th {
    border-bottom-color: #a9b5ab;
  }

  thead .sel, tbody .sel {
    background: #dfdfdf;
    color: #1e7145;
    border-bottom-color: #1e7145;
  }

  tbody .sel {
    border-color: #dfdfdf #1e7145 #dfdfdf #dfdfdf;
  }

  .corner svg {
    display: block;
    margin: 2px 0 0 16px;
  }

  td {
    padding: 3px 0 0 4px;
  }

  .rest {
    border-right: none;
  }

  .text td {
    border-right-color: transparent;
  }

  .banner td:not(.rest), .head td:not(.rest) {
    background: #dd6933;
    border-color: #dd6933;
    color: #fff6ec;
    font-weight: 700;
  }

  .head td:not(.rest) {
    border-color: #8c4526;
    position: relative;
  }

  .head td, .data td {
    padding-left: 0;
    text-align: center;
  }

  .data td:not(.rest) {
    border-color: #444;
  }

  .banner-text {
    display: flex;
    align-items: flex-start;
    gap: 10px;
    height: 30px;
    padding-left: 4px;
  }

  .selected {
    position: relative;
  }

  .selected::before {
    content: "";
    position: absolute;
    inset: -1px;
    border: 1px solid #1e7145;
  }

  .selected::after {
    content: "";
    position: absolute;
    right: -2px;
    bottom: -2px;
    width: 4px;
    height: 4px;
    background: #1e7145;
  }

  .pointer {
    position: absolute;
    right: 64px;
    bottom: 0;
  }

  .vscroll {
    display: flex;
    flex-direction: column;
    align-items: center;
    width: 21px;
    padding: 5px 0 3px;
    background: #f3f3f3;
  }

  .vscroll i {
    width: 8px;
    height: 18px;
    margin: 69px 0 auto;
    border-radius: 4px;
    background: #666;
  }

  .sheet-tabs {
    display: flex;
    flex: none;
    height: 32px;
    border-top: 1px solid #dcdcdc;
    font-size: 12px;
  }

  .nav {
    width: 33px;
    height: 28px;
  }

  .nav:first-child {
    margin-left: 10px;
  }

  .tab {
    width: 62px;
    height: 32px;
    border-right: 1px solid #d0d0d0;
  }

  .tab.current {
    width: 52px;
    height: 27px;
    margin: 0 4px 0 34px;
    border: none;
    border-radius: 0 0 4px 4px;
    background: #fff;
    font-weight: 600;
  }

  .tab.current span {
    line-height: 19px;
    border-bottom: 2px solid #1e7145;
  }

  .nav.add {
    margin-left: 31px;
  }

  .hscroll {
    display: flex;
    align-items: center;
    gap: 5px;
    width: 38%;
    height: 28px;
    margin: 0 24px 0 auto;
  }

  .hscroll .dots {
    margin-right: 15px;
  }

  .track {
    flex: 1;
    background: #f3f3f3;
  }

  .track i {
    display: block;
    width: 66%;
    height: 8px;
    border-radius: 4px;
    background: #6c6c6c;
  }

  .status {
    display: flex;
    align-items: center;
    flex: none;
    height: 22px;
    padding: 0 8px 0 11px;
    background: #f6f6f6;
    color: #333;
    font-size: 10px;
  }

  .macro {
    margin-left: 42px;
  }

  .display {
    gap: 3px;
    margin: 0 18px 0 auto;
  }

  .view {
    width: 40px;
    height: 22px;
  }

  .view.on {
    background: #dedede;
  }

  .zoom {
    display: flex;
    align-items: center;
    gap: 6px;
    margin: 0 13px 0 6px;
  }

  .sign {
    color: #b0b0b0;
    font-size: 14px;
    line-height: 20px;
  }

  .zoom input {
    appearance: none;
    width: 98px;
    height: 14px;
    background: linear-gradient(#333, #333) center / 100% 1px no-repeat, linear-gradient(#333, #333) center / 1px 5px no-repeat;
  }

  .zoom input::-webkit-slider-thumb {
    appearance: none;
    width: 5px;
    height: 12px;
    background: #555;
  }

  .taskbar {
    display: grid;
    grid-template-columns: 13fr auto 25fr;
    align-items: center;
    flex: none;
    height: 48px;
    padding-bottom: 2px;
    background: #1c1c1c;
    border-top: 1px solid #000;
    color: #fff;
  }

  .side {
    padding-left: 10px;
  }

  .apps {
    display: flex;
    align-items: center;
  }

  .app {
    position: relative;
    width: 44px;
    height: 42px;
  }

  .app.active {
    width: 40px;
    margin-left: 1px;
    border-radius: 4px;
    background: #2b2b2b;
  }

  .app.open::after {
    content: "";
    position: absolute;
    bottom: 1px;
    width: 6px;
    height: 3px;
    border-radius: 2px;
    background: #9a9a9a;
  }

  .app.active::after {
    width: 16px;
    background: #55c3f2;
  }

  .task-search {
    display: flex;
    align-items: center;
    gap: 10px;
    width: 219px;
    height: 32px;
    margin: 0 3px 0 4px;
    padding-left: 11px;
    border: 1px solid #585858;
    border-radius: 16px;
    background: #3a3a3a;
    font-size: 13px;
    overflow: hidden;
  }

  .task-search input {
    flex: 1;
    min-width: 0;
  }

  .task-search input::placeholder {
    color: #d4d4d4;
    opacity: 1;
  }

  .tray {
    display: flex;
    align-items: center;
    justify-content: flex-end;
    gap: 17px;
    padding-right: 19px;
  }

  .net {
    display: flex;
    align-items: center;
    gap: 7px;
  }

  time {
    display: flex;
    flex-direction: column;
    min-width: 55px;
    font-size: 11px;
    line-height: 16px;
    text-align: right;
  }
</style>
